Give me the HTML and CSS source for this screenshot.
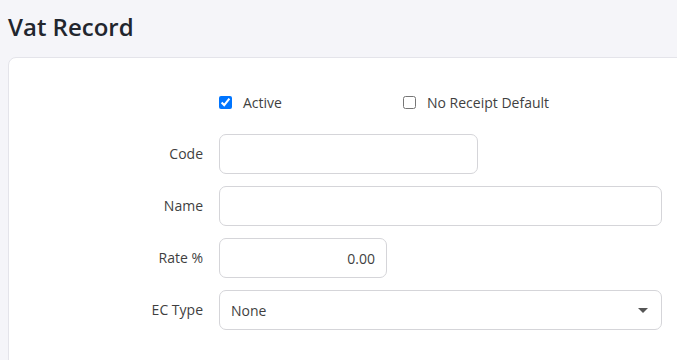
FILE: index.html
```html
<!DOCTYPE html>
<html lang="en">
<head>
    <meta charset="UTF-8">
    <meta name="viewport" content="width=device-width, initial-scale=1.0">
    <title>Vat Record</title>
    <link rel="stylesheet" href="styles.css">
</head>
<body>
    <div class="page">
        <h1>Vat Record</h1>
        <div class="card">
            <form class="record-form">
                <div class="form-label"></div>
                <div class="check-row">
                    <label class="check check-first">
                        <input type="checkbox" checked>
                        <span>Active</span>
                    </label>
                    <label class="check">
                        <input type="checkbox">
                        <span>No Receipt Default</span>
                    </label>
                </div>

                <label class="form-label" for="code">Code</label>
                <input class="field field-code" type="text" id="code">

                <label class="form-label" for="name">Name</label>
                <input class="field field-wide" type="text" id="name">

                <label class="form-label" for="rate">Rate %</label>
                <input class="field field-rate" type="text" id="rate" value="0.00">

                <label class="form-label" for="ec-type">EC Type</label>
                <div class="select-wrap">
                    <select class="field field-wide" id="ec-type">
                        <option>None</option>
                    </select>
                    <!-- caret -->
                    <svg class="caret" width="10" height="5" viewBox="0 0 10 5">
                        <path d="M0 0 L10 0 L5 5 Z" fill="#555"/>
                    </svg>
                </div>
            </form>
        </div>
    </div>
</body>
</html>
```

FILE: styles.css
```css
/* General Styles */
:root {
    --page-bg: #f5f5f9;
    --card-bg: #ffffff;
    --card-border: #e4e4ea;
    --field-border: #d5d5d9;
    --text-color: #3f3f3f;
    --heading-color: #22262e;
}

body {
    margin: 0;
    font-family: "Open Sans", Arial, sans-serif;
    background-color: var(--page-bg);
    color: var(--text-color);
    overflow: hidden;
}

.page {
    padding: 11px 0 0 8px;
}

h1 {
    margin: 0 0 14px;
    font-size: 24px;
    line-height: 32px;
    font-weight: 600;
    color: var(--heading-color);
}

.card {
    background-color: var(--card-bg);
    border: 1px solid var(--card-border);
    border-radius: 8px;
    margin-right: -20px;
    padding: 24px 0 40px;
}

.record-form {
    display: grid;
    grid-template-columns: 194px 1fr;
    column-gap: 16px;
    row-gap: 12px;
    align-items: center;
}

.form-label {
    text-align: right;
    font-size: 14px;
    padding-bottom: 2px;
}

.check-row {
    display: flex;
    align-items: center;
    height: 40px;
    padding-top: 1px;
    box-sizing: border-box;
}

.check {
    display: flex;
    align-items: center;
    gap: 11px;
    font-size: 14px;
}

.check-first {
    width: 184px;
}

.check input {
    margin: 0;
    width: 13px;
    height: 13px;
}

.field {
    box-sizing: border-box;
    height: 40px;
    padding: 0 11px;
    font-family: inherit;
    font-size: 14px;
    color: var(--text-color);
    background-color: #fff;
    border: 1px solid var(--field-border);
    border-radius: 7px;
}

.field:focus {
    outline: none;
}

.field-code {
    width: 259px;
}

.field-wide {
    width: 443px;
}

.field-rate {
    width: 168px;
    text-align: right;
}

.select-wrap {
    position: relative;
    width: 443px;
}

select.field {
    appearance: none;
    -webkit-appearance: none;
    display: block;
}

.caret {
    position: absolute;
    right: 14px;
    top: 18px;
    pointer-events: none;
}
```
